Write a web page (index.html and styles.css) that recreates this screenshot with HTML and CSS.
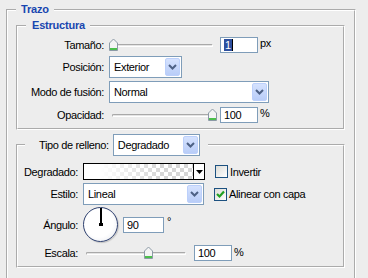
FILE: index.html
```html
<!DOCTYPE html>
<html lang="es">
<head>
    <meta charset="UTF-8">
    <title>Trazo</title>
    <link rel="stylesheet" href="styles.css">
</head>
<body>
    <fieldset class="group outer">
        <legend class="caption">Trazo</legend>

        <fieldset class="group struct">
            <legend class="caption">Estructura</legend>
            <div class="rows">
                <div class="row h17">
                    <span class="lbl">Tamaño:</span>
                    <div class="ctl">
                        <div class="slider s-size">
                            <span class="track"></span>
                            <span class="thumb" style="left: 0px">
                                <svg width="9" height="13" viewBox="0 0 9 13"><path d="M0.5 5 L4.5 1 L8.5 5 V12.5 H0.5 Z" fill="#f4f4f4" stroke="#8c9aa6"/><rect x="1" y="10" width="7" height="2" fill="#4cbf4c"/></svg>
                            </span>
                        </div>
                        <div class="num"><span class="hl">1</span><span class="caret"></span></div>
                        <span class="unit">px</span>
                    </div>
                </div>
                <div class="row h22">
                    <span class="lbl">Posición:</span>
                    <div class="ctl">
                        <div class="combo w73">
                            <span class="val">Exterior</span>
                            <span class="drop"><svg width="9" height="6" viewBox="0 0 9 6"><path d="M1 1 L4.5 4.5 L8 1" fill="none" stroke="#4d6185" stroke-width="2"/></svg></span>
                        </div>
                    </div>
                </div>
                <div class="row h22">
                    <span class="lbl">Modo de fusión:</span>
                    <div class="ctl">
                        <div class="combo w160">
                            <span class="val">Normal</span>
                            <span class="drop"><svg width="9" height="6" viewBox="0 0 9 6"><path d="M1 1 L4.5 4.5 L8 1" fill="none" stroke="#4d6185" stroke-width="2"/></svg></span>
                        </div>
                    </div>
                </div>
                <div class="row h17">
                    <span class="lbl">Opacidad:</span>
                    <div class="ctl">
                        <div class="slider s-size">
                            <span class="track"></span>
                            <span class="thumb" style="left: 99px">
                                <svg width="9" height="13" viewBox="0 0 9 13"><path d="M0.5 5 L4.5 1 L8.5 5 V12.5 H0.5 Z" fill="#f4f4f4" stroke="#8c9aa6"/><rect x="1" y="10" width="7" height="2" fill="#4cbf4c"/></svg>
                            </span>
                        </div>
                        <div class="num">100</div>
                        <span class="unit">%</span>
                    </div>
                </div>
            </div>
        </fieldset>

        <fieldset class="group fill">
            <legend class="fill-legend">
                <span>Tipo de relleno:</span>
                <div class="combo w87">
                    <span class="val">Degradado</span>
                    <span class="drop"><svg width="9" height="6" viewBox="0 0 9 6"><path d="M1 1 L4.5 4.5 L8 1" fill="none" stroke="#4d6185" stroke-width="2"/></svg></span>
                </div>
            </legend>
            <div class="rows">
                <div class="row h17">
                    <span class="lbl">Degradado:</span>
                    <div class="ctl">
                        <div class="grad">
                            <span class="swatch"></span>
                            <span class="pick"><svg width="7" height="4" viewBox="0 0 7 4"><path d="M0 0 H7 L3.5 4 Z" fill="#000"/></svg></span>
                        </div>
                        <label class="opt"><span class="check"></span>Invertir</label>
                    </div>
                </div>
                <div class="row h22">
                    <span class="lbl">Estilo:</span>
                    <div class="ctl">
                        <div class="combo w121">
                            <span class="val">Lineal</span>
                            <span class="drop"><svg width="9" height="6" viewBox="0 0 9 6"><path d="M1 1 L4.5 4.5 L8 1" fill="none" stroke="#4d6185" stroke-width="2"/></svg></span>
                        </div>
                        <label class="opt"><span class="check">
                            <svg width="11" height="11" viewBox="0 0 11 11"><path d="M2 5 L4.5 7.5 L9 2.5" fill="none" stroke="#21a121" stroke-width="2.2"/></svg>
                        </span>Alinear con capa</label>
                    </div>
                </div>
                <div class="row h35 tight">
                    <span class="lbl">Ángulo:</span>
                    <div class="ctl">
                        <div class="dial"><span class="hand"></span></div>
                        <div class="num w41">90</div>
                        <span class="deg">°</span>
                    </div>
                </div>
                <div class="row h16">
                    <span class="lbl">Escala:</span>
                    <div class="ctl">
                        <div class="slider s-scale">
                            <span class="track"></span>
                            <span class="thumb" style="left: 61px">
                                <svg width="9" height="13" viewBox="0 0 9 13"><path d="M0.5 5 L4.5 1 L8.5 5 V12.5 H0.5 Z" fill="#f4f4f4" stroke="#8c9aa6"/><rect x="1" y="10" width="7" height="2" fill="#4cbf4c"/></svg>
                            </span>
                        </div>
                        <div class="num">100</div>
                        <span class="unit">%</span>
                    </div>
                </div>
            </div>
        </fieldset>
    </fieldset>
</body>
</html>
```

FILE: styles.css
```css
html, body {
    margin: 0;
    height: 100%;
    overflow: hidden;
}
body {
    background: #ededed;
    font-family: "Liberation Sans", Arial, sans-serif;
    font-size: 11px;
    letter-spacing: -0.35px;
    color: #000;
}
.group {
    border: 2px groove #fff;
    margin: 0;
    padding: 0;
    min-width: 0;
    box-sizing: border-box;
}
.caption {
    font-weight: bold;
    color: #1846b0;
    line-height: 13px;
    letter-spacing: -0.2px;
}
.outer {
    margin: 3px 0 0 6px;
    width: 350px;
    padding: 3px 9px 14px 8px;
}
.outer > .caption {
    padding: 0 5px 0 5px;
}
.struct {
    margin-bottom: 4px;
}
.struct > .caption {
    margin-left: 8px;
    padding: 0 5px 0 6px;
}
.struct .rows {
    padding: 4px 0 5px;
}
.struct .row {
    grid-template-columns: 86px auto;
}
.fill .rows {
    padding: 7px 0 5px;
}
.fill .row {
    grid-template-columns: 60px auto;
}
.fill .tight {
    margin-top: -1px;
}
.fill-legend {
    display: flex;
    align-items: center;
    gap: 4px;
    margin-left: 7px;
    padding: 0 8px 0 14px;
}
.rows {
    display: flex;
    flex-direction: column;
    gap: 3px;
}
.row {
    display: grid;
    column-gap: 5px;
    align-items: center;
}
.h16 { height: 16px; }
.h17 { height: 17px; }
.h22 { height: 22px; }
.h35 { height: 35px; }
.lbl {
    text-align: right;
    white-space: nowrap;
}
.ctl {
    display: flex;
    align-items: center;
}

/* sliders */
.slider {
    position: relative;
    height: 14px;
}
.s-size {
    width: 108px;
    margin-right: 3px;
}
.s-scale {
    width: 107px;
    margin-right: 4px;
}
.track {
    position: absolute;
    left: 3px;
    right: 4px;
    top: 6px;
    height: 3px;
    box-sizing: border-box;
    border: 1px solid #a9a9a9;
    border-bottom-color: #fff;
    border-right-color: #fff;
    border-radius: 2px;
    background: #e4e4e4;
}
.thumb {
    position: absolute;
    top: 0;
    width: 9px;
    height: 13px;
}
.thumb svg {
    display: block;
}

/* text fields */
.num {
    width: 38px;
    height: 16px;
    box-sizing: border-box;
    border: 1px solid #7f9db9;
    background: #fff;
    padding: 0 3px;
    line-height: 14px;
    display: flex;
    align-items: center;
}
.w41 {
    width: 41px;
    margin-left: 5px;
}
.hl {
    background: #2d4f9e;
    color: #fff;
    padding: 0 1px;
    line-height: 12px;
}
.caret {
    width: 1px;
    height: 12px;
    background: #000;
}
.unit {
    margin-left: 2px;
    margin-top: -3px;
}
.deg {
    margin-left: 3px;
    margin-top: -8px;
}

/* combos */
.combo {
    display: flex;
    align-items: center;
    height: 22px;
    box-sizing: border-box;
    border: 1px solid #7f9db9;
    background: #fff;
    padding: 1px;
}
.w73 { width: 73px; }
.w87 { width: 87px; }
.w121 { width: 121px; }
.w160 { width: 160px; }
.val {
    flex: 1;
    padding-left: 3px;
    color: #000;
    font-weight: normal;
}
.drop {
    width: 15px;
    height: 18px;
    box-sizing: border-box;
    border: 1px solid #bcd0fb;
    border-radius: 2px;
    background: linear-gradient(#d5e2fe, #b9cdf8);
    display: flex;
    align-items: center;
    justify-content: center;
}
.fill-legend > span {
    color: #000;
}

/* gradient picker */
.grad {
    display: flex;
    width: 122px;
    height: 17px;
    box-sizing: border-box;
    border: 1px solid #000;
}
.swatch {
    flex: 1;
    background:
        linear-gradient(to right, #fff 0, #fff 15%, rgba(255, 255, 255, 0) 70%),
        repeating-conic-gradient(#d6d6d6 0 25%, #fff 0 50%) 0 0 / 8px 8px;
}
.pick {
    width: 10px;
    border-left: 1px solid #000;
    background: #fff;
    display: flex;
    align-items: center;
    justify-content: center;
}

/* checkboxes */
.opt {
    display: flex;
    align-items: center;
    gap: 2px;
    margin-left: 10px;
    white-space: nowrap;
}
.check {
    width: 13px;
    height: 13px;
    box-sizing: border-box;
    border: 1px solid #1c5180;
    background: linear-gradient(135deg, #dcdcd7, #fff);
    display: flex;
    align-items: center;
    justify-content: center;
}

/* angle dial */
.dial {
    position: relative;
    width: 35px;
    height: 35px;
    box-sizing: border-box;
    border: 1px solid #2f4170;
    border-radius: 50%;
    background: radial-gradient(circle at 45% 45%, #fff 55%, #e2e5ec);
    box-shadow: 1px 1px 1px #c4c4c4;
}
.hand {
    position: absolute;
    left: 16px;
    top: 0;
    width: 2px;
    height: 17px;
    background: #000;
}
.hand::after {
    content: "";
    position: absolute;
    left: -1px;
    bottom: -1px;
    width: 4px;
    height: 3px;
    background: #000;
}
```
